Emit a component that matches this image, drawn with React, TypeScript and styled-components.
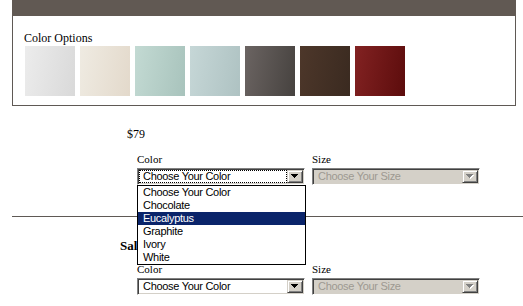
import React from "react";
import styled, { createGlobalStyle } from "styled-components";

const Global = createGlobalStyle`
  html, body { margin: 0; padding: 0; background: #fff; }
  body { font-family: "Liberation Serif", "Times New Roman", serif; color: #000; }
`;

const Page = styled.div`
  width: 523px;
  height: 306px;
  overflow: hidden;
`;

const Panel = styled.section`
  box-sizing: border-box;
  margin-left: 12px;
  width: 504px;
  border: 1px solid #5f5955;
  border-top: none;
`;

const PanelHeader = styled.div`
  height: 16px;
  margin: 0 -1px;
  background: #615953;
`;

const PanelBody = styled.div`
  padding: 15px 11px 9px;
`;

const SectionTitle = styled.div`
  font-size: 12px;
  line-height: 14px;
  margin-bottom: 1px;
`;

const SwatchRow = styled.div`
  display: flex;
  gap: 5px;
  margin-left: 1px;
`;

const Swatch = styled.div<{ $from: string; $to: string }>`
  width: 50px;
  height: 50px;
  background: linear-gradient(100deg, ${(p) => p.$from}, ${(p) => p.$to});
`;

const Product = styled.div<{ $top: number }>`
  padding-left: 120px;
  margin-top: ${(p) => p.$top}px;
`;

const Price = styled.div`
  margin-left: 7px;
  font-size: 12px;
  line-height: 14px;
  margin-bottom: 12px;
`;

const SaleTitle = styled.div`
  font-size: 13px;
  font-weight: bold;
  line-height: 15px;
  margin-bottom: 10px;
`;

const OptionRow = styled.div`
  margin-left: 17px;
  display: grid;
  grid-template-columns: 168px 168px;
  column-gap: 7px;
`;

const Field = styled.div`
  position: relative;
`;

const FieldLabel = styled.div`
  font-size: 11px;
  line-height: 13px;
  margin-bottom: 2px;
`;

const SelectFrame = styled.div<{ $disabled?: boolean }>`
  box-sizing: border-box;
  width: 168px;
  height: 17px;
  display: flex;
  padding: 1px;
  border: 1px solid;
  border-color: #808080 #ffffff #ffffff #808080;
  box-shadow: inset 1px 1px 0 #404040, inset -1px -1px 0 #d4d0c8;
  background: ${(p) => (p.$disabled ? "#d4d0c8" : "#ffffff")};
`;

const SelectValue = styled.div<{ $focused?: boolean; $disabled?: boolean }>`
  flex: 1;
  box-sizing: border-box;
  height: 13px;
  padding-left: 3px;
  border: 1px ${(p) => (p.$focused ? "dotted #000" : "solid transparent")};
  font-family: "Liberation Sans", Arial, sans-serif;
  font-size: 11px;
  line-height: 11px;
  letter-spacing: -0.3px;
  white-space: nowrap;
  overflow: hidden;
  color: ${(p) => (p.$disabled ? "#9d9991" : "#000")};
`;

const ArrowButton = styled.div`
  box-sizing: border-box;
  width: 16px;
  height: 13px;
  display: flex;
  align-items: center;
  justify-content: center;
  border: 1px solid;
  border-color: #d4d0c8 #404040 #404040 #d4d0c8;
  box-shadow: inset 1px 1px 0 #ffffff, inset -1px -1px 0 #808080;
  background: #d4d0c8;
`;

const DropList = styled.ul`
  position: absolute;
  z-index: 10;
  left: 0;
  top: 100%;
  width: 169px;
  box-sizing: border-box;
  margin: 0;
  padding: 0;
  list-style: none;
  border: 1px solid #000;
  background: #fff;
`;

const DropItem = styled.li<{ $active?: boolean }>`
  height: 13px;
  padding-left: 5px;
  font-family: "Liberation Sans", Arial, sans-serif;
  font-size: 11px;
  line-height: 13px;
  letter-spacing: -0.3px;
  white-space: nowrap;
  background: ${(p) => (p.$active ? "#0a246a" : "transparent")};
  color: ${(p) => (p.$active ? "#fff" : "#000")};
`;

const Divider = styled.hr`
  margin: 31px 0 0 12px;
  border: none;
  height: 1px;
  background: #5f5955;
`;

const Arrow = ({ disabled }: { disabled?: boolean }) => {
  const d = "M0 0h7v1H0zM1 1h5v1H1zM2 2h3v1H2zM3 3h1v1H3z";
  return (
    <svg width="8" height="5" viewBox="0 0 8 5" shapeRendering="crispEdges">
      {disabled && <path d={d} fill="#ffffff" transform="translate(1 1)" />}
      <path d={d} fill={disabled ? "#808080" : "#000000"} />
    </svg>
  );
};

type SelectProps = {
  value: string;
  disabled?: boolean;
  focused?: boolean;
  options?: string[];
  active?: string;
};

const FakeSelect = ({ value, disabled, focused, options, active }: SelectProps) => (
  <>
    <SelectFrame $disabled={disabled}>
      <SelectValue $focused={focused} $disabled={disabled}>
        {value}
      </SelectValue>
      <ArrowButton>
        <Arrow disabled={disabled} />
      </ArrowButton>
    </SelectFrame>
    {options && (
      <DropList>
        {options.map((o) => (
          <DropItem key={o} $active={o === active}>
            {o}
          </DropItem>
        ))}
      </DropList>
    )}
  </>
);

const swatches = [
  { name: "White", from: "#ececec", to: "#d9d9d9" },
  { name: "Ivory", from: "#efebe2", to: "#e3d9cb" },
  { name: "Eucalyptus", from: "#c3dad3", to: "#a8c3bc" },
  { name: "Mist", from: "#c6d7d7", to: "#aec2c2" },
  { name: "Graphite", from: "#6b6462", to: "#46423f" },
  { name: "Chocolate", from: "#4d372a", to: "#3a2a20" },
  { name: "Red", from: "#822222", to: "#5c0c0c" },
];

const colorOptions = ["Choose Your Color", "Chocolate", "Eucalyptus", "Graphite", "Ivory", "White"];

export default function App() {
  return (
    <Page>
      <Global />
      <Panel>
        <PanelHeader />
        <PanelBody>
          <SectionTitle>Color Options</SectionTitle>
          <SwatchRow>
            {swatches.map((s) => (
              <Swatch key={s.name} $from={s.from} $to={s.to} title={s.name} />
            ))}
          </SwatchRow>
        </PanelBody>
      </Panel>
      <Product $top={21}>
        <Price>$79</Price>
        <OptionRow>
          <Field>
            <FieldLabel>Color</FieldLabel>
            <FakeSelect value="Choose Your Color" focused options={colorOptions} active="Eucalyptus" />
          </Field>
          <Field>
            <FieldLabel>Size</FieldLabel>
            <FakeSelect value="Choose Your Size" disabled />
          </Field>
        </OptionRow>
      </Product>
      <Divider />
      <Product $top={21}>
        <SaleTitle>Sale Price</SaleTitle>
        <OptionRow>
          <Field>
            <FieldLabel>Color</FieldLabel>
            <FakeSelect value="Choose Your Color" />
          </Field>
          <Field>
            <FieldLabel>Size</FieldLabel>
            <FakeSelect value="Choose Your Size" disabled />
          </Field>
        </OptionRow>
      </Product>
    </Page>
  );
}
